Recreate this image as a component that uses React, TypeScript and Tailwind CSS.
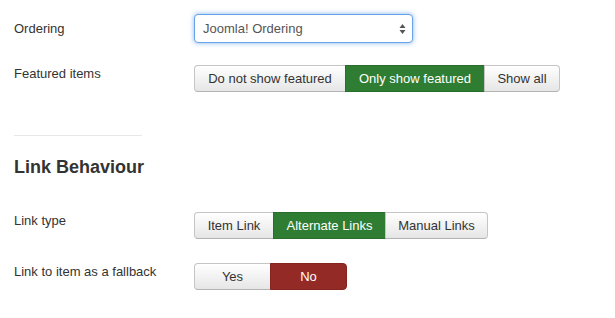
import React from 'react';

type Opt = { label: string; w: string; active?: 'green' | 'red' };

const Group: React.FC<{ options: Opt[] }> = ({ options }) => (
  <div className="flex h-[27px]">
    {options.map((o, i) => {
      const first = i === 0;
      const last = i === options.length - 1;
      const round = `${first ? 'rounded-l-[4px]' : ''} ${last ? 'rounded-r-[4px]' : ''}`;
      let look = 'bg-gradient-to-b from-white to-[#e6e6e6] text-[#333] border border-[#c5c5c5] border-b-[#b3b3b3]';
      if (o.active === 'green') look = 'bg-[#2f7d32] text-white border border-[#2a6e2d]';
      if (o.active === 'red') look = 'bg-[#942a25] text-white border border-[#85241f]';
      return (
        <div
          key={o.label}
          className={`${o.w} ${look} ${round} ${first ? '' : '-ml-px'} flex items-center justify-center text-[13px]`}
        >
          {o.label}
        </div>
      );
    })}
  </div>
);

const Row: React.FC<{ label: string; children: React.ReactNode; className?: string }> = ({ label, children, className }) => (
  <div className={`flex items-start ${className ?? ''}`}>
    <div className="w-[180px] pt-[1px] text-[13px] leading-[16px] text-[#333]">{label}</div>
    {children}
  </div>
);

export default function App() {
  return (
    <div className="w-[615px] h-[318px] bg-white pl-[14px] pt-[14px] text-[#333]" style={{ fontFamily: '"Liberation Sans", Arial, sans-serif' }}>
      <div className="flex items-center">
        <div className="w-[180px] text-[13px] leading-[16px] text-[#333]">Ordering</div>
        <div className="w-[219px] h-[29px] rounded-[4px] border border-[#66a3e8] shadow-[0_0_5px_rgba(82,148,230,0.7)] bg-white flex items-center justify-between pl-[8px] pr-[6px] text-[13px] text-[#555]">
          <span>Joomla! Ordering</span>
          <svg width="7" height="12" viewBox="0 0 7 12">
            <path d="M3.5 1 L6.5 5 L0.5 5 Z" fill="#555" />
            <path d="M3.5 11 L6.5 7 L0.5 7 Z" fill="#555" />
          </svg>
        </div>
      </div>
      <Row label="Featured items" className="mt-[22px]">
        <Group
          options={[
            { label: 'Do not show featured', w: 'w-[152px]' },
            { label: 'Only show featured', w: 'w-[140px]', active: 'green' },
            { label: 'Show all', w: 'w-[76px]' },
          ]}
        />
      </Row>
      <div className="w-[128px] h-px bg-[#e8e8e8] mt-[43px]" />
      <h2 className="text-[18px] font-bold text-[#333] mt-[20px] leading-[22px]">Link Behaviour</h2>
      <Row label="Link type" className="mt-[34px]">
        <Group
          options={[
            { label: 'Item Link', w: 'w-[80px]' },
            { label: 'Alternate Links', w: 'w-[113px]', active: 'green' },
            { label: 'Manual Links', w: 'w-[103px]' },
          ]}
        />
      </Row>
      <Row label="Link to item as a fallback" className="mt-[24px]">
        <Group
          options={[
            { label: 'Yes', w: 'w-[77px]' },
            { label: 'No', w: 'w-[77px]', active: 'red' },
          ]}
        />
      </Row>
    </div>
  );
}
